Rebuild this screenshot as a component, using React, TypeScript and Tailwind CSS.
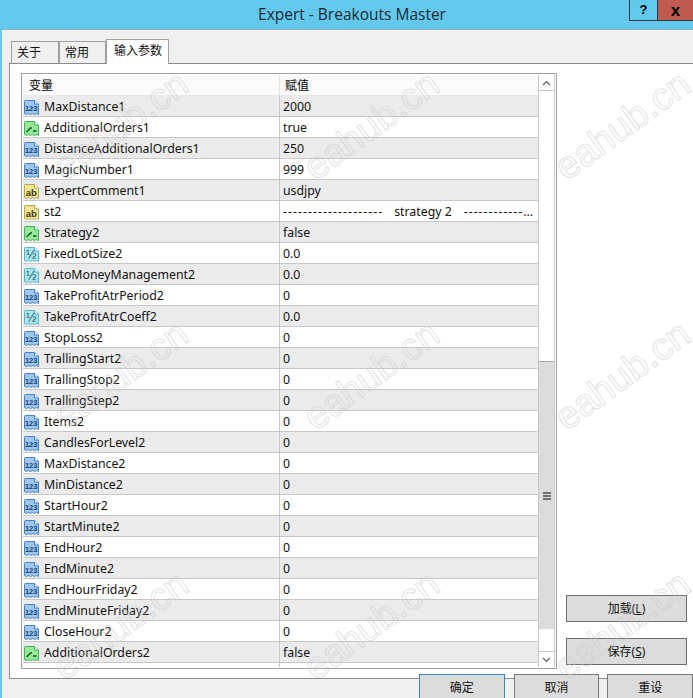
import React from "react";

type Kind = "int" | "bool" | "str" | "dbl";

interface Row {
  name: string;
  value: React.ReactNode;
  kind: Kind;
}

const separatorValue = (
  <>
    <span className="tracking-[1.05px]">--------------------</span>
    <span className="ml-[11px]">strategy 2</span>
    <span className="ml-[12px] tracking-[1px]">------------</span>
    <span>...</span>
  </>
);

const rows: Row[] = [
  { name: "MaxDistance1", value: "2000", kind: "int" },
  { name: "AdditionalOrders1", value: "true", kind: "bool" },
  { name: "DistanceAdditionalOrders1", value: "250", kind: "int" },
  { name: "MagicNumber1", value: "999", kind: "int" },
  { name: "ExpertComment1", value: "usdjpy", kind: "str" },
  { name: "st2", value: separatorValue, kind: "str" },
  { name: "Strategy2", value: "false", kind: "bool" },
  { name: "FixedLotSize2", value: "0.0", kind: "dbl" },
  { name: "AutoMoneyManagement2", value: "0.0", kind: "dbl" },
  { name: "TakeProfitAtrPeriod2", value: "0", kind: "int" },
  { name: "TakeProfitAtrCoeff2", value: "0.0", kind: "dbl" },
  { name: "StopLoss2", value: "0", kind: "int" },
  { name: "TrallingStart2", value: "0", kind: "int" },
  { name: "TrallingStop2", value: "0", kind: "int" },
  { name: "TrallingStep2", value: "0", kind: "int" },
  { name: "Items2", value: "0", kind: "int" },
  { name: "CandlesForLevel2", value: "0", kind: "int" },
  { name: "MaxDistance2", value: "0", kind: "int" },
  { name: "MinDistance2", value: "0", kind: "int" },
  { name: "StartHour2", value: "0", kind: "int" },
  { name: "StartMinute2", value: "0", kind: "int" },
  { name: "EndHour2", value: "0", kind: "int" },
  { name: "EndMinute2", value: "0", kind: "int" },
  { name: "EndHourFriday2", value: "0", kind: "int" },
  { name: "EndMinuteFriday2", value: "0", kind: "int" },
  { name: "CloseHour2", value: "0", kind: "int" },
  { name: "AdditionalOrders2", value: "false", kind: "bool" },
  { name: "", value: "", kind: "int" },
];

const palette: Record<Kind, { fill: string; stroke: string; ink: string; label: string }> = {
  int: { fill: "#9fc6ec", stroke: "#4480c2", ink: "#123f78", label: "123" },
  bool: { fill: "#98e89a", stroke: "#3fb356", ink: "#0b5e1f", label: "" },
  str: { fill: "#efe59a", stroke: "#b8a546", ink: "#3f380a", label: "ab" },
  dbl: { fill: "#ade6ec", stroke: "#52b4c8", ink: "#17566e", label: "½" },
};

const TypeIcon = ({ kind }: { kind: Kind }) => {
  const c = palette[kind];
  return (
    <svg width="17" height="17" viewBox="0 0 17 17" className="shrink-0">
      <path
        d="M1.5 2.5Q1.5 1.5 2.5 1.5H11.5L15.5 5V15.5L13.5 14.5L11.5 15.5L9.5 14.5L7.5 15.5L5.5 14.5L3.5 15.5L1.5 14.5Z"
        fill={c.fill}
        stroke={c.stroke}
      />
      <path d="M11.5 1.5V5H15.5" fill="#f4fafd" stroke={c.stroke} />
      {kind === "bool" ? (
        <path d="M3.5 12L7.5 8H9M10 11H13.5" fill="none" stroke={c.ink} strokeWidth="1.3" />
      ) : (
        <text
          x="8.2"
          y={kind === "int" ? 12 : kind === "str" ? 12.5 : 13}
          textAnchor="middle"
          fontFamily="'Liberation Sans', sans-serif"
          fontWeight={kind === "dbl" ? 400 : 700}
          fontSize={kind === "int" ? 7.5 : kind === "str" ? 9.5 : 12.5}
          fill={c.ink}
        >
          {c.label}
        </text>
      )}
    </svg>
  );
};

const Watermark = () => (
  <div className="absolute inset-0 ml-[-5px] grid grid-cols-[repeat(3,251px)] grid-rows-[repeat(3,250px)] pointer-events-none">
    {Array.from({ length: 9 }).map((_, i) => (
      <div key={i} className="flex items-center justify-center">
        <span className="-rotate-[36deg] font-['Liberation_Sans',sans-serif] text-[38px] leading-none text-transparent [-webkit-text-stroke:1px_rgba(200,200,200,0.55)]">
          eahub.cn
        </span>
      </div>
    ))}
  </div>
);

const Chevron = ({ up }: { up?: boolean }) => (
  <svg width="9" height="6" viewBox="0 0 9 6">
    <path d={up ? "M1 5L4.5 1.5L8 5" : "M1 1L4.5 4.5L8 1"} fill="none" stroke="#606060" strokeWidth="1.2" />
  </svg>
);

const Scrollbar = () => (
  <div className="w-[17px] flex flex-col bg-white border-l border-r border-[#c8c8c8]">
    <div className="h-[16px] flex items-center justify-center border-b border-[#c8c8c8]">
      <Chevron up />
    </div>
    <div className="h-[270px]" />
    <div className="h-[268px] bg-[#dcdcdc] border-t border-[#a8a8a8] flex flex-col items-center justify-center gap-[1px]">
      <div className="w-[8px] h-[2px] bg-[#707070]" />
      <div className="w-[8px] h-[2px] bg-[#707070]" />
      <div className="w-[8px] h-[2px] bg-[#707070]" />
    </div>
    <div className="flex-1" />
    <div className="h-[16px] flex items-center justify-center border-t border-[#c8c8c8]">
      <Chevron />
    </div>
  </div>
);

const ParamList = () => (
  <div className="w-[536px] h-[596px] border border-[#a0a0a0] p-[1px] flex overflow-hidden bg-white">
    <div className="flex-1 min-w-0 overflow-hidden">
      <div className="flex h-[21px] bg-[#fbfbfb] border-b border-[#e8e8e8] text-[12px] leading-[21px]">
        <div className="w-[257px] pl-[6px] border-r border-[#e4e4e4]">变量</div>
        <div className="pl-[5px]">赋值</div>
      </div>
      {rows.map((row, i) => (
        <div
          key={i}
          className={`flex h-[21px] border-b border-[#c8c8c8] text-[12.3px] text-[#111] ${
            i % 2 === 0 ? "bg-[#ebebeb]" : "bg-white"
          }`}
        >
          <div className="w-[257px] flex items-center gap-[4px] pt-[2px] leading-[20px] border-r border-[#c8c8c8]">
            <TypeIcon kind={row.kind} />
            <span>{row.name}</span>
          </div>
          <div className="flex-1 pl-[3px] leading-[22px] whitespace-pre overflow-hidden">{row.value}</div>
        </div>
      ))}
    </div>
    <Scrollbar />
  </div>
);

const SideButton = ({ children }: { children: React.ReactNode }) => (
  <button className="w-[121px] h-[27px] bg-[#dcdcdc] border border-[#6e6e6e] text-[12px] text-[#111]">
    {children}
  </button>
);

const FooterButton = ({ label, focused, className }: { label: string; focused?: boolean; className?: string }) => (
  <button
    className={`w-[86px] h-[24px] pt-[2px] bg-[#dcdcdc] border border-b-0 text-[12px] text-[#111] ${
      focused ? "border-[#3c85b8]" : "border-[#7a7a7a]"
    } ${className ?? ""}`}
  >
    {label}
  </button>
);

export default function App() {
  return (
    <div className="relative w-[693px] h-[698px] overflow-hidden flex flex-col bg-[#63c9ec] font-['Noto_Sans','Noto_Sans_CJK_SC',sans-serif]">
      <div className="h-[29px] shrink-0 pl-[11px] flex items-center justify-center relative text-[15.5px] text-[#1a2a33] font-['Open_Sans',sans-serif]">
        Expert - Breakouts Master
        <div className="absolute top-0 right-0 flex h-[21px]">
          <div className="w-[29px] border border-t-0 border-[#2c3a40] flex items-center justify-center font-['Liberation_Sans',sans-serif] font-bold text-[13px] text-black">
            ?
          </div>
          <div className="w-[35px] bg-[#bf5a50] border-b border-[#2c3a40] flex items-center justify-center font-['Liberation_Sans',sans-serif] font-bold text-[17px] leading-none text-black">
            x
          </div>
        </div>
      </div>

      <div className="flex-1 ml-[2px] bg-[#f0f0f0] border-t border-[#8fb4c4] flex flex-col">
        <div className="h-[33px] pl-[9px] flex items-end text-[12px] text-[#111]">
          <div className="w-[48px] h-[22px] border border-b-0 border-[#a0a0a0] pl-[5px] leading-[21px]">关于</div>
          <div className="w-[47px] h-[22px] border border-b-0 border-[#a0a0a0] pl-[5px] leading-[21px]">常用</div>
          <div className="w-[63px] h-[25px] mb-[-1px] relative z-10 bg-white border border-b-0 border-[#a0a0a0] pl-[7px] leading-[22px]">输入参数</div>
        </div>

        <div className="h-[616px] ml-[7px] bg-white border-l border-t border-b border-[#8a8a8a] pl-[11px] pt-[9px] flex gap-[9px]">
          <ParamList />
          <div className="w-[121px] flex flex-col justify-end gap-[16px] pb-[13px]">
            <SideButton>加载(<span className="underline">L</span>)</SideButton>
            <SideButton>保存(<span className="underline">S</span>)</SideButton>
          </div>
        </div>

        <div className="mt-[-5px] pl-[417px] flex relative">
          <FooterButton label="确定" focused />
          <FooterButton label="取消" className="ml-[9px]" />
          <FooterButton label="重设" className="ml-[8px]" />
        </div>
      </div>

      <Watermark />
    </div>
  );
}
